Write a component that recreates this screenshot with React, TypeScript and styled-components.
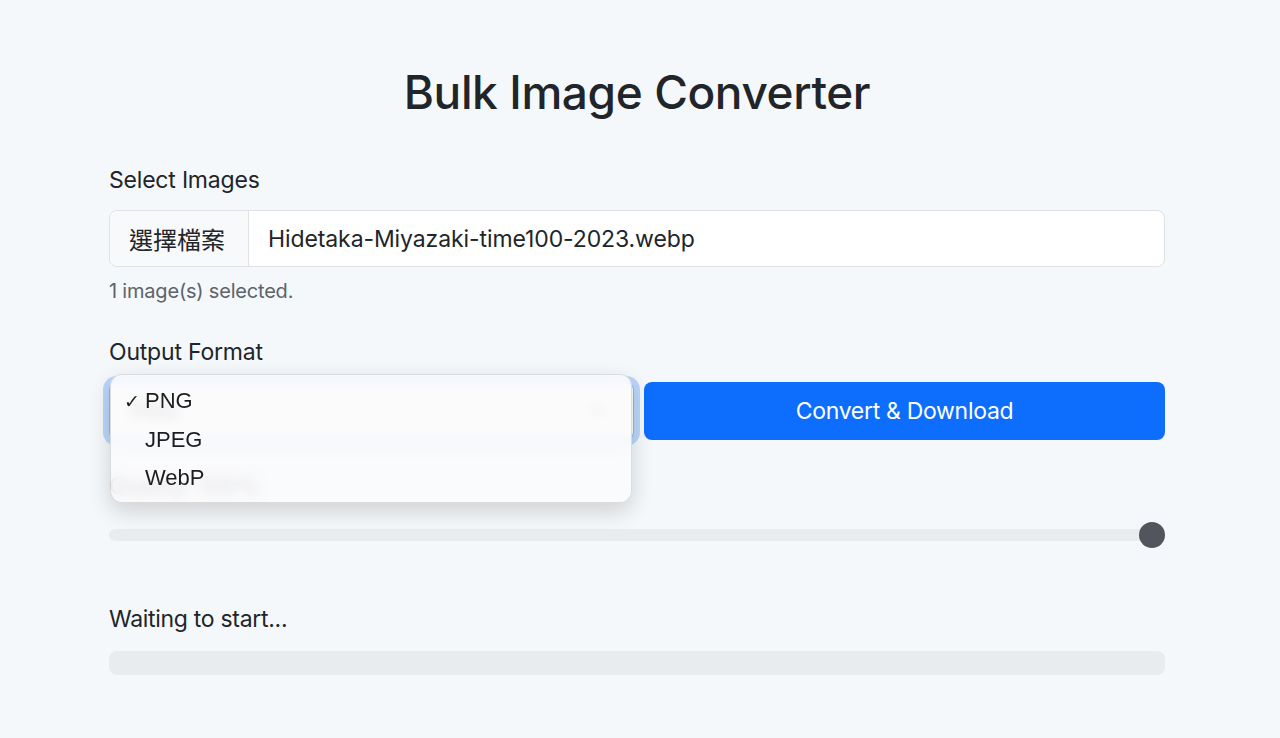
import React from "react";
import styled, { createGlobalStyle } from "styled-components";

const Global = createGlobalStyle`
  html, body { margin: 0; padding: 0; }
  body {
    background: #f5f8fa;
    font-family: Inter, "Noto Sans", "Noto Sans CJK TC", sans-serif;
    color: #212529;
  }
`;

const Page = styled.main`
  width: 1056px;
  margin: 0 115px 0 109px;
  padding-top: 62px;
  padding-bottom: 63px;
`;

const Title = styled.h1`
  margin: 0 0 42px;
  text-align: center;
  font-size: 46px;
  font-weight: 500;
  letter-spacing: -0.4px;
  line-height: 60px;
`;

const Field = styled.section<{ $gap?: number }>`
  display: flex;
  flex-direction: column;
  margin-bottom: ${(p) => p.$gap ?? 0}px;
`;

const Label = styled.label`
  font-size: 23px;
  line-height: 32px;
  margin-bottom: 14px;
  letter-spacing: -0.2px;
`;

const InputGroup = styled.div`
  display: flex;
  height: 57px;
  border: 1px solid #dee2e6;
  border-radius: 8px;
  background: #fff;
  overflow: hidden;
  box-sizing: border-box;
`;

const FileButton = styled.span`
  display: flex;
  align-items: center;
  padding: 0 19px;
  width: 139px;
  box-sizing: border-box;
  background: #f8f9fa;
  border-right: 1px solid #dee2e6;
  font-family: "Noto Sans CJK TC", sans-serif;
  font-size: 24px;
`;

const FileName = styled.span`
  display: flex;
  align-items: center;
  padding-left: 19px;
  font-size: 23px;
  letter-spacing: -0.1px;
`;

const Help = styled.div`
  margin-top: 10px;
  font-size: 20px;
  line-height: 28px;
  color: #5c636a;
  letter-spacing: -0.2px;
`;

const Row = styled.div`
  display: grid;
  grid-template-columns: 525px 1fr;
  gap: 10px;
  position: relative;
`;

const Select = styled.div`
  height: 58px;
  box-sizing: border-box;
  border: 1px solid #86b7fe;
  border-radius: 8px;
  background: #fff;
  box-shadow: 0 0 0 6px rgba(13, 110, 253, 0.25);
  display: flex;
  align-items: center;
  justify-content: space-between;
  padding: 0 28px 0 20px;
  font-size: 23px;
`;

const Button = styled.button`
  height: 58px;
  border: 0;
  border-radius: 8px;
  background: #0d6efd;
  color: #fff;
  font-family: inherit;
  font-size: 23px;
  letter-spacing: -0.3px;
`;

const Menu = styled.ul`
  position: absolute;
  left: 1px;
  top: -8px;
  width: 522px;
  height: 129px;
  box-sizing: border-box;
  margin: 0;
  padding: 7px 0 0;
  list-style: none;
  border-radius: 12px;
  background: rgba(250, 251, 252, 0.88);
  backdrop-filter: blur(6px);
  border: 1px solid rgba(0, 0, 0, 0.12);
  box-shadow: 0 8px 22px rgba(0, 0, 0, 0.16);
  z-index: 2;
`;

const Item = styled.li`
  display: flex;
  align-items: center;
  height: 38.5px;
  font-family: "Liberation Sans", Arial, sans-serif;
  font-size: 22px;
  color: #1d1d1f;
`;

const Check = styled.span`
  width: 34px;
  padding-left: 13px;
  box-sizing: border-box;
  font-size: 19px;
`;

const QualityLabel = styled.div`
  margin-top: 30px;
  font-size: 23px;
  line-height: 32px;
  margin-bottom: 27px;
`;

const Track = styled.div`
  position: relative;
  height: 12px;
  border-radius: 6px;
  background: #e9ecef;
`;

const Thumb = styled.span`
  position: absolute;
  right: 0;
  top: 50%;
  width: 26px;
  height: 26px;
  margin-top: -13px;
  border-radius: 50%;
  background: #52565c;
`;

const Status = styled.div`
  margin-top: 62px;
  font-size: 23px;
  line-height: 32px;
  letter-spacing: -0.3px;
  margin-bottom: 16px;
`;

const Progress = styled.div`
  height: 24px;
  border-radius: 8px;
  background: #e9ecef;
`;

export default function App() {
  return (
    <>
      <Global />
      <Page>
        <Title>Bulk Image Converter</Title>
        <Field $gap={31}>
          <Label>Select Images</Label>
          <InputGroup>
            <FileButton>選擇檔案</FileButton>
            <FileName>Hidetaka-Miyazaki-time100-2023.webp</FileName>
          </InputGroup>
          <Help>1 image(s) selected.</Help>
        </Field>
        <Field>
          <Label>Output Format</Label>
          <Row>
            <Select>
              <span>PNG</span>
              <svg width="16" height="16" viewBox="0 0 16 16" fill="none" stroke="#343a40" strokeWidth="2" strokeLinecap="round" strokeLinejoin="round">
                <path d="M2 5l6 6 6-6" />
              </svg>
            </Select>
            <Button>Convert &amp; Download</Button>
            <Menu>
              <Item><Check>✓</Check>PNG</Item>
              <Item><Check />JPEG</Item>
              <Item><Check />WebP</Item>
            </Menu>
          </Row>
        </Field>
        <QualityLabel>Quality: 100%</QualityLabel>
        <Track>
          <Thumb />
        </Track>
        <Status>Waiting to start...</Status>
        <Progress />
      </Page>
    </>
  );
}
